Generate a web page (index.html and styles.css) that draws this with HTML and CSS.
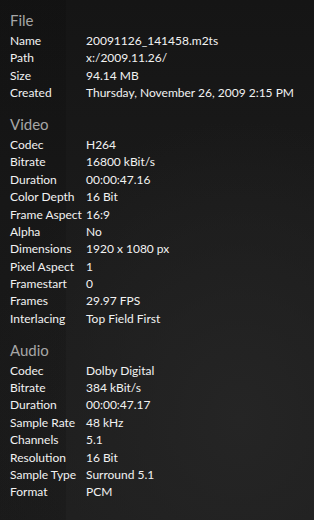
FILE: index.html
```html
<!DOCTYPE html>
<html>
<head>
<meta charset="utf-8">
<link rel="stylesheet" href="styles.css">
</head>
<body>
<div class="panel">
  <section class="group">
    <h2 class="title">File</h2>
    <div class="rows">
      <span class="k">Name</span><span class="v">20091126_141458.m2ts</span>
      <span class="k">Path</span><span class="v">x:/2009.11.26/</span>
      <span class="k">Size</span><span class="v">94.14 MB</span>
      <span class="k">Created</span><span class="v">Thursday, November 26, 2009 2:15 PM</span>
    </div>
  </section>
  <section class="group">
    <h2 class="title">Video</h2>
    <div class="rows">
      <span class="k">Codec</span><span class="v">H264</span>
      <span class="k">Bitrate</span><span class="v">16800 kBit/s</span>
      <span class="k">Duration</span><span class="v">00:00:47.16</span>
      <span class="k">Color Depth</span><span class="v">16 Bit</span>
      <span class="k">Frame Aspect</span><span class="v">16:9</span>
      <span class="k">Alpha</span><span class="v">No</span>
      <span class="k">Dimensions</span><span class="v">1920 x 1080 px</span>
      <span class="k">Pixel Aspect</span><span class="v">1</span>
      <span class="k">Framestart</span><span class="v">0</span>
      <span class="k">Frames</span><span class="v">29.97 FPS</span>
      <span class="k">Interlacing</span><span class="v">Top Field First</span>
    </div>
  </section>
  <section class="group">
    <h2 class="title">Audio</h2>
    <div class="rows">
      <span class="k">Codec</span><span class="v">Dolby Digital</span>
      <span class="k">Bitrate</span><span class="v">384 kBit/s</span>
      <span class="k">Duration</span><span class="v">00:00:47.17</span>
      <span class="k">Sample Rate</span><span class="v">48 kHz</span>
      <span class="k">Channels</span><span class="v">5.1</span>
      <span class="k">Resolution</span><span class="v">16 Bit</span>
      <span class="k">Sample Type</span><span class="v">Surround 5.1</span>
      <span class="k">Format</span><span class="v">PCM</span>
    </div>
  </section>
</div>
</body>
</html>
```

FILE: styles.css
```css
html, body {
  margin: 0;
  padding: 0;
  width: 314px;
  height: 520px;
  overflow: hidden;
}
body {
  background-color: #181818;
  background-image:
    linear-gradient(to right, rgba(0,0,0,0.12) 0, rgba(0,0,0,0.12) 66px, transparent 66px),
    radial-gradient(ellipse 260px 300px at 240px 420px, #252525 0%, rgba(37,37,37,0) 100%),
    linear-gradient(to bottom, #151515 0, #1a1a1a 200px, #1e1e1e 520px);
  font-family: Lato, "Open Sans", sans-serif;
  color: #f2f2f2;
}
.panel {
  display: flex;
  flex-direction: column;
  gap: 12.4px;
  padding: 10px 0 0 10px;
}
.title {
  margin: 0 0 2px;
  font-weight: normal;
  font-size: 15px;
  line-height: 20px;
  color: #a6a6a6;
}
.rows {
  display: grid;
  grid-template-columns: 76px auto;
  grid-auto-rows: 17.4px;
  font-size: 12px;
  line-height: 17.4px;
}
.k, .v {
  white-space: nowrap;
}
```
